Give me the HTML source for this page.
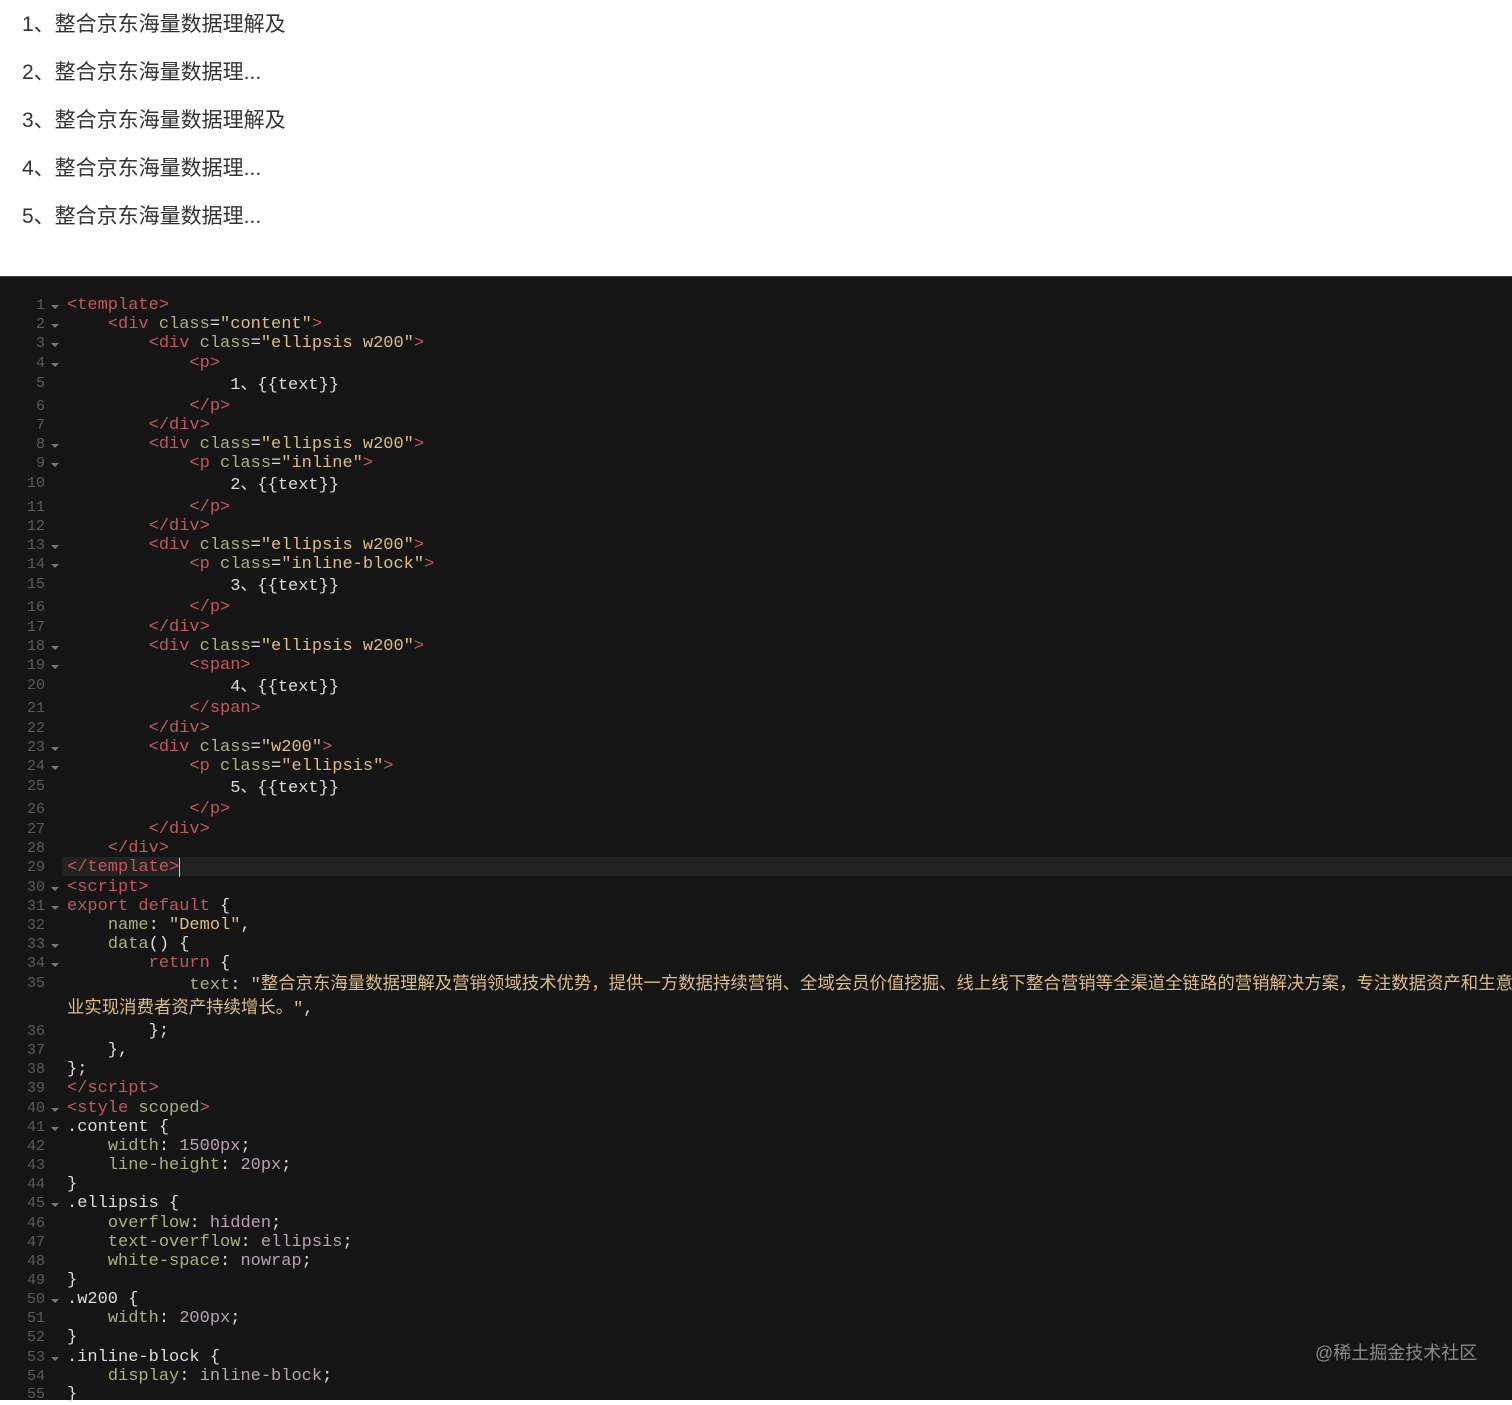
<!DOCTYPE html>
<html><head><meta charset="utf-8">
<style>
html,body{margin:0;padding:0;width:1512px;height:1399px;overflow:hidden;background:#fff}
.top{position:absolute;left:22px;font:21px "Liberation Sans","Noto Sans CJK SC",sans-serif;color:#333;line-height:28px;white-space:nowrap}
.dark{position:absolute;left:0;top:276px;width:1512px;height:1123px;background:#151515;border-top:1px solid #3a3a3a}
.wrap{position:absolute;left:0;top:2px;width:1512px;height:1399px}
.l{position:absolute;left:67px;height:20px;line-height:20px;font:17px/20px "Liberation Mono","Noto Sans CJK SC",monospace;color:#dcdcdc;white-space:pre;}
.n{position:absolute;left:0;width:45px;text-align:right;height:20px;line-height:20px;font:15px/20px "Liberation Mono",monospace;color:#5a5a5a}
.ar{position:absolute;left:51px;width:0;height:0;border-left:4px solid transparent;border-right:4px solid transparent;border-top:4px solid #777}
.t{color:#c0585e}.a{color:#a9b27c}.s{color:#ddbd88}.v{color:#b8a1b3}.k{color:#c0585e}
.cj{font-size:17.4px}
.hl{position:absolute;left:62px;top:857px;width:1450px;height:19px;background:#222}
.wm{position:absolute;left:1315px;top:1339px;font:18px "Liberation Sans","Noto Sans CJK SC",sans-serif;color:#8a8a8a}
</style></head><body>
<div class="top" style="top:11px">1、整合京东海量数据理解及</div>
<div class="top" style="top:59px">2、整合京东海量数据理...</div>
<div class="top" style="top:107px">3、整合京东海量数据理解及</div>
<div class="top" style="top:155px">4、整合京东海量数据理...</div>
<div class="top" style="top:203px">5、整合京东海量数据理...</div>
<div class="dark"></div>
<div class="hl"></div>
<div class="wrap">
<div class="n" style="top:294px">1</div><div class="ar" style="top:303px"></div><div class="l" style="top:294px"><span class="t">&lt;template&gt;</span></div>
<div class="n" style="top:313px">2</div><div class="ar" style="top:322px"></div><div class="l" style="top:313px">    <span class="t">&lt;div</span> <span class="a">class</span>=<span class="s">"content"</span><span class="t">&gt;</span></div>
<div class="n" style="top:332px">3</div><div class="ar" style="top:341px"></div><div class="l" style="top:332px">        <span class="t">&lt;div</span> <span class="a">class</span>=<span class="s">"ellipsis w200"</span><span class="t">&gt;</span></div>
<div class="n" style="top:352px">4</div><div class="ar" style="top:361px"></div><div class="l" style="top:352px">            <span class="t">&lt;p&gt;</span></div>
<div class="n" style="top:372px">5</div><div class="l" style="top:374px">                1、{{text}}</div>
<div class="n" style="top:395px">6</div><div class="l" style="top:395px">            <span class="t">&lt;/p&gt;</span></div>
<div class="n" style="top:414px">7</div><div class="l" style="top:414px">        <span class="t">&lt;/div&gt;</span></div>
<div class="n" style="top:433px">8</div><div class="ar" style="top:442px"></div><div class="l" style="top:433px">        <span class="t">&lt;div</span> <span class="a">class</span>=<span class="s">"ellipsis w200"</span><span class="t">&gt;</span></div>
<div class="n" style="top:452px">9</div><div class="ar" style="top:461px"></div><div class="l" style="top:452px">            <span class="t">&lt;p</span> <span class="a">class</span>=<span class="s">"inline"</span><span class="t">&gt;</span></div>
<div class="n" style="top:472px">10</div><div class="l" style="top:474px">                2、{{text}}</div>
<div class="n" style="top:496px">11</div><div class="l" style="top:496px">            <span class="t">&lt;/p&gt;</span></div>
<div class="n" style="top:515px">12</div><div class="l" style="top:515px">        <span class="t">&lt;/div&gt;</span></div>
<div class="n" style="top:534px">13</div><div class="ar" style="top:543px"></div><div class="l" style="top:534px">        <span class="t">&lt;div</span> <span class="a">class</span>=<span class="s">"ellipsis w200"</span><span class="t">&gt;</span></div>
<div class="n" style="top:553px">14</div><div class="ar" style="top:562px"></div><div class="l" style="top:553px">            <span class="t">&lt;p</span> <span class="a">class</span>=<span class="s">"inline-block"</span><span class="t">&gt;</span></div>
<div class="n" style="top:573px">15</div><div class="l" style="top:575px">                3、{{text}}</div>
<div class="n" style="top:596px">16</div><div class="l" style="top:596px">            <span class="t">&lt;/p&gt;</span></div>
<div class="n" style="top:616px">17</div><div class="l" style="top:616px">        <span class="t">&lt;/div&gt;</span></div>
<div class="n" style="top:635px">18</div><div class="ar" style="top:644px"></div><div class="l" style="top:635px">        <span class="t">&lt;div</span> <span class="a">class</span>=<span class="s">"ellipsis w200"</span><span class="t">&gt;</span></div>
<div class="n" style="top:654px">19</div><div class="ar" style="top:663px"></div><div class="l" style="top:654px">            <span class="t">&lt;span&gt;</span></div>
<div class="n" style="top:674px">20</div><div class="l" style="top:676px">                4、{{text}}</div>
<div class="n" style="top:697px">21</div><div class="l" style="top:697px">            <span class="t">&lt;/span&gt;</span></div>
<div class="n" style="top:717px">22</div><div class="l" style="top:717px">        <span class="t">&lt;/div&gt;</span></div>
<div class="n" style="top:736px">23</div><div class="ar" style="top:745px"></div><div class="l" style="top:736px">        <span class="t">&lt;div</span> <span class="a">class</span>=<span class="s">"w200"</span><span class="t">&gt;</span></div>
<div class="n" style="top:755px">24</div><div class="ar" style="top:764px"></div><div class="l" style="top:755px">            <span class="t">&lt;p</span> <span class="a">class</span>=<span class="s">"ellipsis"</span><span class="t">&gt;</span></div>
<div class="n" style="top:775px">25</div><div class="l" style="top:777px">                5、{{text}}</div>
<div class="n" style="top:798px">26</div><div class="l" style="top:798px">            <span class="t">&lt;/p&gt;</span></div>
<div class="n" style="top:818px">27</div><div class="l" style="top:818px">        <span class="t">&lt;/div&gt;</span></div>
<div class="n" style="top:837px">28</div><div class="l" style="top:837px">    <span class="t">&lt;/div&gt;</span></div>
<div class="n" style="top:856px">29</div><div class="l" style="top:856px"><span class="t">&lt;/template&gt;</span><span style="border-left:1px solid #ccc"></span></div>
<div class="n" style="top:876px">30</div><div class="ar" style="top:885px"></div><div class="l" style="top:876px"><span class="t">&lt;script&gt;</span></div>
<div class="n" style="top:895px">31</div><div class="ar" style="top:904px"></div><div class="l" style="top:895px"><span class="k">export default</span> {</div>
<div class="n" style="top:914px">32</div><div class="l" style="top:914px">    <span class="a">name</span>: <span class="s">"Demol"</span>,</div>
<div class="n" style="top:933px">33</div><div class="ar" style="top:942px"></div><div class="l" style="top:933px">    <span class="a">data</span>() {</div>
<div class="n" style="top:952px">34</div><div class="ar" style="top:961px"></div><div class="l" style="top:952px">        <span class="k">return</span> {</div>
<div class="n" style="top:972px">35</div><div class="l" style="top:974px">            <span class="a">text</span>: <span class="s">"<span class="cj">整合京东海量数据理解及营销领域技术优势，提供一方数据持续营销、全域会员价值挖掘、线上线下整合营销等全渠道全链路的营销解决方案，专注数据资产和生意增长</span></span></div>
<div class="l" style="top:998px"><span class="s"><span class="cj">业实现消费者资产持续增长。</span>"</span>,</div>
<div class="n" style="top:1020px">36</div><div class="l" style="top:1020px">        };</div>
<div class="n" style="top:1039px">37</div><div class="l" style="top:1039px">    },</div>
<div class="n" style="top:1058px">38</div><div class="l" style="top:1058px">};</div>
<div class="n" style="top:1077px">39</div><div class="l" style="top:1077px"><span class="t">&lt;/script&gt;</span></div>
<div class="n" style="top:1097px">40</div><div class="ar" style="top:1106px"></div><div class="l" style="top:1097px"><span class="t">&lt;style</span> <span class="a">scoped</span><span class="t">&gt;</span></div>
<div class="n" style="top:1116px">41</div><div class="ar" style="top:1125px"></div><div class="l" style="top:1116px">.content {</div>
<div class="n" style="top:1135px">42</div><div class="l" style="top:1135px">    <span class="a">width</span>: <span class="v">1500px</span>;</div>
<div class="n" style="top:1154px">43</div><div class="l" style="top:1154px">    <span class="a">line-height</span>: <span class="v">20px</span>;</div>
<div class="n" style="top:1173px">44</div><div class="l" style="top:1173px">}</div>
<div class="n" style="top:1192px">45</div><div class="ar" style="top:1201px"></div><div class="l" style="top:1192px">.ellipsis {</div>
<div class="n" style="top:1212px">46</div><div class="l" style="top:1212px">    <span class="a">overflow</span>: <span class="v">hidden</span>;</div>
<div class="n" style="top:1231px">47</div><div class="l" style="top:1231px">    <span class="a">text-overflow</span>: <span class="v">ellipsis</span>;</div>
<div class="n" style="top:1250px">48</div><div class="l" style="top:1250px">    <span class="a">white-space</span>: <span class="v">nowrap</span>;</div>
<div class="n" style="top:1269px">49</div><div class="l" style="top:1269px">}</div>
<div class="n" style="top:1288px">50</div><div class="ar" style="top:1297px"></div><div class="l" style="top:1288px">.w200 {</div>
<div class="n" style="top:1307px">51</div><div class="l" style="top:1307px">    <span class="a">width</span>: <span class="v">200px</span>;</div>
<div class="n" style="top:1326px">52</div><div class="l" style="top:1326px">}</div>
<div class="n" style="top:1346px">53</div><div class="ar" style="top:1355px"></div><div class="l" style="top:1346px">.inline-block {</div>
<div class="n" style="top:1365px">54</div><div class="l" style="top:1365px">    <span class="a">display</span>: <span class="v">inline-block</span>;</div>
<div class="n" style="top:1383px">55</div><div class="l" style="top:1383px">}</div>
</div>
<div class="wm">@稀土掘金技术社区</div>
</body></html>
